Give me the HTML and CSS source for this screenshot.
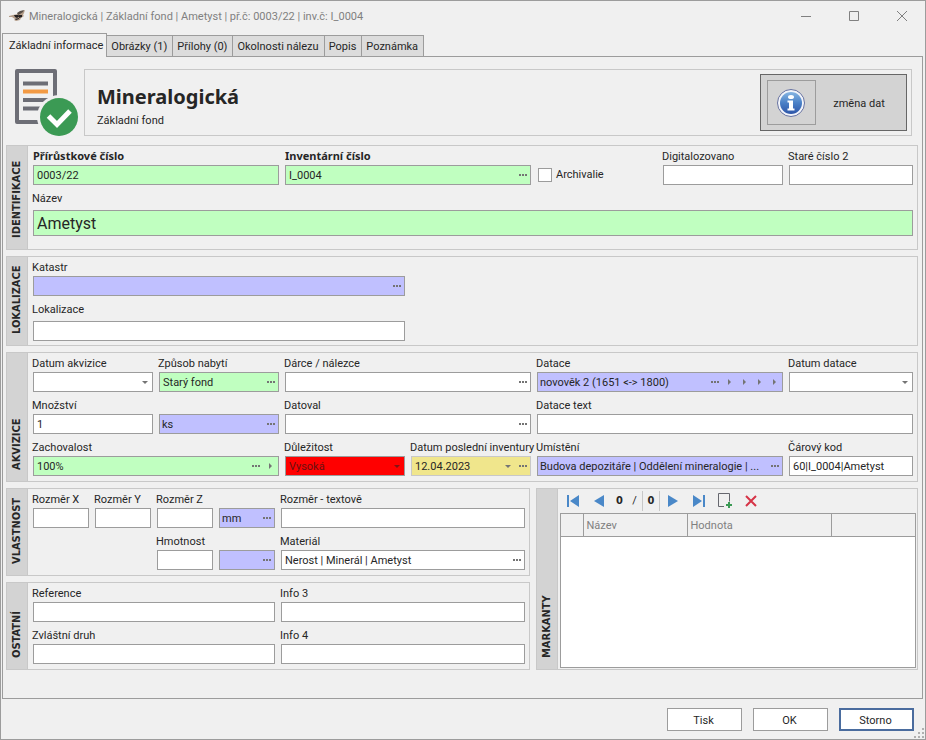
FILE: index.html
```html
<!DOCTYPE html>
<html lang="cs">
<head>
    <meta charset="utf-8">
    <title>Mineralogická | Základní fond | Ametyst</title>
    <link rel="stylesheet" href="styles.css">
</head>
<body>
    <!-- shared glyphs -->
    <svg class="defs" width="0" height="0">
        <symbol id="dots" viewBox="0 0 8 2"><path d="M0 0h2v2H0zM3 0h2v2H3zM6 0h2v2H6z"/></symbol>
        <symbol id="down" viewBox="0 0 6 3"><path d="M0 0h6L3 3z"/></symbol>
        <symbol id="right" viewBox="0 0 3 6"><path d="M0 0v6l3-3z"/></symbol>
    </svg>

    <div class="window">
        <header class="titlebar">
            <svg class="app-icon" width="16" height="12" viewBox="0 0 16 12">
                <path d="M0 6l4-1 5-1 2-2 5-2-1 3-1 2 1 1-3 2-1 2-4 1-2-1 1-1-3-2-3 0z" fill="#b39c88"/>
                <path d="M8 3l3-2 4-1-1 2-3 2-2 1z" fill="#5a5048"/>
                <path d="M5 5l4 0 2 1-3 2-2-1z" fill="#242021"/>
                <path d="M10 5l3 0 0 2-3 1z" fill="#242021"/>
                <path d="M6 9l4-1 0 1-3 1z" fill="#29272a"/>
            </svg>
            <h1 class="title">Mineralogická | Základní fond | Ametyst | př.č: 0003/22 | inv.č: I_0004</h1>
            <div class="controls">
                <button aria-label="Minimalizovat"><svg width="10" height="10"><path d="M0 5.5h10"/></svg></button>
                <button aria-label="Maximalizovat"><svg width="10" height="10"><path d="M.5 .5h9v9h-9z"/></svg></button>
                <button aria-label="Zavřít"><svg width="10" height="10"><path d="M0 0l10 10M10 0L0 10"/></svg></button>
            </div>
        </header>

        <nav class="tabs">
            <button class="tab active">Základní informace</button>
            <button class="tab">Obrázky (1)</button>
            <button class="tab">Přílohy (0)</button>
            <button class="tab">Okolnosti nálezu</button>
            <button class="tab">Popis</button>
            <button class="tab">Poznámka</button>
        </nav>

        <main class="page">
            <div class="head">
                <svg class="head-icon" width="64" height="67" viewBox="0 0 64 67">
                    <path d="M3 2h38v51H3z" fill="none" stroke="#6d6e76" stroke-width="4" stroke-linejoin="round"/>
                    <path d="M9 14.500h25M9 31h25M9 39.500h25" stroke="#6d6e76" stroke-width="4"/>
                    <path d="M9 22.500h25" stroke="#f29a44" stroke-width="4"/>
                    <circle cx="45" cy="48" r="22" fill="#f0f0f0"/>
                    <circle cx="45" cy="48" r="19" fill="#3b9a54"/>
                    <path d="M34.500 47l8.500 8.500L56 42" fill="none" stroke="#fff" stroke-width="5"/>
                </svg>
                <div class="head-box">
                    <div>
                        <h2>Mineralogická</h2>
                        <p>Základní fond</p>
                    </div>
                    <button class="change">
                        <span class="change-icon">
                            <svg width="28" height="28" viewBox="0 0 28 28">
                                <defs>
                                    <linearGradient id="blue" x1="0" y1="0" x2="0" y2="1">
                                        <stop offset="0" stop-color="#86b5e2"/>
                                        <stop offset=".5" stop-color="#4a80c6"/>
                                        <stop offset="1" stop-color="#2d55a8"/>
                                    </linearGradient>
                                </defs>
                                <circle cx="14" cy="14" r="13.500" fill="#f2f4fa" stroke="#66719f"/>
                                <circle cx="14" cy="14" r="11" fill="url(#blue)"/>
                                <ellipse cx="14" cy="8" rx="3" ry="2" fill="#fff"/>
                                <path d="M10.500 11.500h5.500v8h1.500v2h-7v-2h1.500v-6h-1.500z" fill="#fff"/>
                            </svg>
                        </span>
                        <span class="change-text">změna dat</span>
                    </button>
                </div>
            </div>

            <section class="group ident">
                <h3>IDENTIFIKACE</h3>
                <div class="fields wide">
                    <div class="field c2 strong">
                        <label for="prir">Přírůstkové číslo</label>
                        <div class="box green"><input id="prir" value="0003/22"></div>
                    </div>
                    <div class="field c2 strong">
                        <label for="inv">Inventární číslo</label>
                        <div class="box green"><input id="inv" value="I_0004"><button aria-label="Vybrat"><svg width="8" height="2"><use href="#dots"/></svg></button></div>
                    </div>
                    <label class="check"><input type="checkbox"> Archivalie</label>
                    <div class="field">
                        <label for="digi">Digitalozovano</label>
                        <div class="box"><input id="digi"></div>
                    </div>
                    <div class="field">
                        <label for="stare">Staré číslo 2</label>
                        <div class="box"><input id="stare"></div>
                    </div>
                    <div class="field c7 spaced big">
                        <label for="nazev">Název</label>
                        <div class="box green"><input id="nazev" value="Ametyst"></div>
                    </div>
                </div>
            </section>

            <section class="group lokal">
                <h3>LOKALIZACE</h3>
                <div class="fields wide">
                    <div class="field c3">
                        <label for="katastr">Katastr</label>
                        <div class="box blue"><input id="katastr"><button aria-label="Vybrat"><svg width="8" height="2"><use href="#dots"/></svg></button></div>
                    </div>
                    <div class="field c3 spaced row-start">
                        <label for="lokal">Lokalizace</label>
                        <div class="box"><input id="lokal"></div>
                    </div>
                </div>
            </section>

            <section class="group">
                <h3>AKVIZICE</h3>
                <div class="fields wide">
                    <div class="field">
                        <label for="datum">Datum akvizice</label>
                        <div class="box"><input id="datum"><button aria-label="Kalendář"><svg width="6" height="3"><use href="#down"/></svg></button></div>
                    </div>
                    <div class="field">
                        <label for="zpusob">Způsob nabytí</label>
                        <div class="box green"><input id="zpusob" value="Starý fond"><button aria-label="Vybrat"><svg width="8" height="2"><use href="#dots"/></svg></button></div>
                    </div>
                    <div class="field c2">
                        <label for="darce">Dárce / nálezce</label>
                        <div class="box"><input id="darce"><button aria-label="Vybrat"><svg width="8" height="2"><use href="#dots"/></svg></button></div>
                    </div>
                    <div class="field c2">
                        <label for="datace">Datace</label>
                        <div class="box blue">
                            <input id="datace" value="novověk 2 (1651 &lt;-&gt; 1800)">
                            <button aria-label="Vybrat"><svg width="8" height="2"><use href="#dots"/></svg></button>
                            <button aria-label="Úroveň 1"><svg width="3" height="6"><use href="#right"/></svg></button>
                            <button aria-label="Úroveň 2"><svg width="3" height="6"><use href="#right"/></svg></button>
                            <button aria-label="Úroveň 3"><svg width="3" height="6"><use href="#right"/></svg></button>
                            <button aria-label="Úroveň 4"><svg width="3" height="6"><use href="#right"/></svg></button>
                        </div>
                    </div>
                    <div class="field">
                        <label for="ddatace">Datum datace</label>
                        <div class="box"><input id="ddatace"><button aria-label="Kalendář"><svg width="6" height="3"><use href="#down"/></svg></button></div>
                    </div>

                    <div class="field">
                        <label for="mnoz">Množství</label>
                        <div class="box"><input id="mnoz" value="1"></div>
                    </div>
                    <div class="field">
                        <div class="box blue"><input aria-label="Jednotka množství" value="ks"><button aria-label="Vybrat"><svg width="8" height="2"><use href="#dots"/></svg></button></div>
                    </div>
                    <div class="field c2">
                        <label for="datoval">Datoval</label>
                        <div class="box"><input id="datoval"><button aria-label="Vybrat"><svg width="8" height="2"><use href="#dots"/></svg></button></div>
                    </div>
                    <div class="field c3">
                        <label for="dtext">Datace text</label>
                        <div class="box"><input id="dtext"></div>
                    </div>

                    <div class="field c2">
                        <label for="zach">Zachovalost</label>
                        <div class="box green">
                            <input id="zach" value="100%">
                            <button aria-label="Vybrat"><svg width="8" height="2"><use href="#dots"/></svg></button>
                            <button aria-label="Další"><svg width="3" height="6"><use href="#right"/></svg></button>
                        </div>
                    </div>
                    <div class="field">
                        <label for="dulez">Důležitost</label>
                        <div class="box red"><select id="dulez"><option>Vysoká</option></select><span class="arrow"><svg width="6" height="3"><use href="#down"/></svg></span></div>
                    </div>
                    <div class="field">
                        <label for="dinv">Datum poslední inventury</label>
                        <div class="box yellow">
                            <input id="dinv" value="12.04.2023">
                            <button aria-label="Kalendář"><svg width="6" height="3"><use href="#down"/></svg></button>
                            <button aria-label="Vybrat"><svg width="8" height="2"><use href="#dots"/></svg></button>
                        </div>
                    </div>
                    <div class="field c2">
                        <label for="umist">Umístění</label>
                        <div class="box blue"><input id="umist" value="Budova depozitáře | Oddělení mineralogie | ..."><button aria-label="Vybrat"><svg width="8" height="2"><use href="#dots"/></svg></button></div>
                    </div>
                    <div class="field">
                        <label for="kod">Čárový kod</label>
                        <div class="box"><input id="kod" value="60|I_0004|Ametyst"></div>
                    </div>
                </div>
            </section>

            <div class="bottom">
                <div class="stack">
                    <section class="group">
                        <h3>VLASTNOST</h3>
                        <div class="fields narrow">
                            <div class="field">
                                <label for="rx">Rozměr X</label>
                                <div class="box"><input id="rx"></div>
                            </div>
                            <div class="field">
                                <label for="ry">Rozměr Y</label>
                                <div class="box"><input id="ry"></div>
                            </div>
                            <div class="field">
                                <label for="rz">Rozměr Z</label>
                                <div class="box"><input id="rz"></div>
                            </div>
                            <div class="field">
                                <div class="box blue"><input aria-label="Jednotka rozměru" value="mm"><button aria-label="Vybrat"><svg width="8" height="2"><use href="#dots"/></svg></button></div>
                            </div>
                            <div class="field">
                                <label for="rt">Rozměr - textově</label>
                                <div class="box"><input id="rt"></div>
                            </div>
                            <div class="field third">
                                <label for="hmot">Hmotnost</label>
                                <div class="box"><input id="hmot"></div>
                            </div>
                            <div class="field">
                                <div class="box blue"><input aria-label="Jednotka hmotnosti"><button aria-label="Vybrat"><svg width="8" height="2"><use href="#dots"/></svg></button></div>
                            </div>
                            <div class="field">
                                <label for="mat">Materiál</label>
                                <div class="box"><input id="mat" value="Nerost | Minerál | Ametyst"><button aria-label="Vybrat"><svg width="8" height="2"><use href="#dots"/></svg></button></div>
                            </div>
                        </div>
                    </section>

                    <section class="group">
                        <h3>OSTATNÍ</h3>
                        <div class="fields narrow">
                            <div class="field c4">
                                <label for="ref">Reference</label>
                                <div class="box"><input id="ref"></div>
                            </div>
                            <div class="field">
                                <label for="info3">Info 3</label>
                                <div class="box"><input id="info3"></div>
                            </div>
                            <div class="field c4">
                                <label for="druh">Zvláštní druh</label>
                                <div class="box"><input id="druh"></div>
                            </div>
                            <div class="field">
                                <label for="info4">Info 4</label>
                                <div class="box"><input id="info4"></div>
                            </div>
                        </div>
                    </section>
                </div>

                <section class="group">
                    <h3>MARKANTY</h3>
                    <div class="marks">
                        <div class="toolbar">
                            <button aria-label="První"><svg width="12" height="12" fill="#4a88c8"><path d="M0 0h2v12H0zM12 0v12L3 6z"/></svg></button>
                            <button aria-label="Předchozí"><svg width="10" height="12" fill="#4a88c8"><path d="M10 0v12L0 6z"/></svg></button>
                            <b class="pos">0</b>
                            <span class="slash">/</span>
                            <b class="count">0</b>
                            <button aria-label="Další"><svg width="10" height="12" fill="#4a88c8"><path d="M0 0v12l10-6z"/></svg></button>
                            <button aria-label="Poslední"><svg width="12" height="12" fill="#4a88c8"><path d="M10 0h2v12h-2zM0 0v12l9-6z"/></svg></button>
                            <button aria-label="Přidat"><svg width="14" height="16"><path d="M6 13.500H.5V.5h11v8" fill="none" stroke="#66676e"/><path d="M8 11h2V9h2v2h2v2h-2v2h-2v-2H8z" fill="#3b9a54"/></svg></button>
                            <button aria-label="Smazat"><svg width="12" height="12"><path d="M1 1l10 10M11 1L1 11" stroke="#d63447" stroke-width="2"/></svg></button>
                        </div>
                        <div class="grid">
                            <table>
                                <colgroup><col class="col-mark"><col class="col-name"><col class="col-value"><col></colgroup>
                                <thead>
                                    <tr><th></th><th>Název</th><th>Hodnota</th><th></th></tr>
                                </thead>
                            </table>
                        </div>
                    </div>
                </section>
            </div>
        </main>

        <footer class="footer">
            <button>Tisk</button>
            <button>OK</button>
            <button class="default">Storno</button>
            <svg class="grip" width="12" height="12" fill="#b0b0b0"><path d="M8 0h2v2H8zM4 4h2v2H4zM8 4h2v2H8zM0 8h2v2H0zM4 8h2v2H4zM8 8h2v2H8z"/></svg>
        </footer>
    </div>
</body>
</html>
```
FILE: styles.css
```css
* {
    box-sizing: border-box;
}

body {
    margin: 0;
    background-color: #f0f0f0;
    color: #262626;
    font: 11px/20px Roboto, Tahoma, sans-serif;
}

h1, h2, h3, p {
    margin: 0;
    font-size: inherit;
}

button, input, select {
    font: inherit;
    color: inherit;
    margin: 0;
    padding: 0;
    border: none;
    border-radius: 0;
    background: none;
}

svg {
    display: block;
}

.defs {
    position: absolute;
}

.window {
    display: flex;
    flex-direction: column;
    min-height: 100vh;
    border: 1px solid #9c9c9c;
}

/* title bar */

.titlebar {
    display: flex;
    align-items: center;
    height: 30px;
    margin-bottom: 2px;
    padding-left: 8px;
}

.title {
    flex: 1;
    margin-left: 4px;
    padding-top: 2px;
    font-weight: normal;
    color: #808080;
}

.controls {
    display: flex;
}

.controls button {
    display: flex;
    justify-content: center;
    align-items: center;
    width: 48px;
    height: 30px;
    padding-left: 2px;
}

.controls svg {
    fill: none;
    stroke: #808080;
}

/* tabs */

.tabs {
    display: flex;
    align-items: flex-end;
    margin-left: 1px;
}

.tab {
    height: 21px;
    padding: 2px 5px 0 4px;
    border: 1px solid #9c9c9c;
    border-bottom: none;
    border-left: none;
    background-color: #dcdcdc;
    line-height: 18px;
    white-space: nowrap;
}

.tab.active {
    position: relative;
    height: 24px;
    margin-bottom: -1px;
    padding: 0 3px 0 6px;
    border-left: 1px solid #9c9c9c;
    background-color: #f0f0f0;
}

.page {
    flex: 1;
    display: flex;
    flex-direction: column;
    gap: 6px;
    margin: 0 2px 0 1px;
    padding: 12px 4px 28px 3px;
    border: 1px solid #9c9c9c;
}

/* header */

.head {
    display: flex;
    gap: 6px;
    margin: 0 6px 3px 8px;
}

.head-box {
    flex: 1;
    display: flex;
    justify-content: space-between;
    align-items: center;
    padding: 4px 4px 4px 12px;
    border: 1px solid #c8c8c8;
}

.head h2 {
    margin-top: 8px;
    font: bold 20px/28px "Noto Sans", Tahoma, sans-serif;
}

.change {
    display: flex;
    align-items: center;
    width: 147px;
    height: 57px;
    padding-left: 6px;
    border: 1px solid #666;
    background-color: #d3d3d3;
}

.change-icon {
    display: flex;
    justify-content: center;
    align-items: center;
    width: 49px;
    height: 45px;
    padding-right: 2px;
    border: 1px solid #9c9c9c;
}

.change-text {
    flex: 1;
    padding: 2px 4px 0 0;
}

/* groups */

.group {
    display: flex;
    border: 1px solid #c8c8c8;
}

.group h3 {
    width: 21px;
    padding-top: 11px;
    border-left: 1px solid #c8c8c8;
    background-color: #d3d3d3;
    font: bold 11px/20px "DejaVu Sans Condensed", Tahoma, sans-serif;
    writing-mode: vertical-rl;
    transform: rotate(180deg);
}

.fields {
    flex: 1;
    display: grid;
    align-items: end;
    gap: 4px 6px;
    padding: 1px 4px 5px 5px;
}

.wide {
    grid-template-columns: repeat(6, minmax(0, 30fr)) minmax(0, 31fr);
}

.narrow {
    grid-template-columns: repeat(4, minmax(0, 14fr)) minmax(0, 61fr);
}

.ident .fields {
    padding-bottom: 13px;
}

.lokal .fields {
    padding-bottom: 4px;
}

.c2 { grid-column: span 2; }
.c3 { grid-column: span 3; }
.c4 { grid-column: span 4; }
.c7 { grid-column: span 7; }
.row-start { grid-column: 1 / span 3; }
.third { grid-column: 3; }

.field label {
    display: block;
    height: 18px;
    margin-left: -1px;
    white-space: nowrap;
}

.strong label {
    margin-left: 0;
    font: bold 11px/18px "Noto Sans", Tahoma, sans-serif;
}

.spaced label {
    margin-bottom: 3px;
}

.box {
    display: flex;
    height: 20px;
    border: 1px solid #9c9c9c;
    background-color: #fff;
}

.box input, .box select {
    flex: 1;
    min-width: 0;
    padding: 2px 2px 0 3px;
    line-height: 16px;
    outline: none;
    appearance: none;
}

.box button, .arrow {
    display: flex;
    justify-content: center;
    align-items: center;
    width: 15px;
    fill: #747474;
}

.box.green { background-color: #c0ffc0; }
.box.blue { background-color: #c0c0ff; }
.box.yellow { background-color: #f0e68c; border-color: #c8c8c8; }
.box.red { background-color: #f00; color: #6b1010; }
.box.red .arrow { fill: #801414; }

.box.blue input {
    padding-left: 2px;
}

.big .box {
    height: 26px;
    font-size: 16px;
}

.big .box input {
    padding-top: 0;
}

.check {
    display: flex;
    align-items: center;
    gap: 4px;
    height: 20px;
    padding-left: 1px;
}

.check input {
    appearance: none;
    width: 14px;
    height: 14px;
    border: 1px solid #9c9c9c;
    background-color: #fff;
}

/* bottom row */

.bottom {
    display: grid;
    grid-template-columns: minmax(0, 262fr) minmax(0, 191fr);
    gap: 6px;
}

.stack {
    display: flex;
    flex-direction: column;
    gap: 6px;
}

.marks {
    flex: 1;
    display: flex;
    flex-direction: column;
    padding: 0 1px 1px 2px;
}

.toolbar {
    display: flex;
    align-items: center;
    height: 24px;
}

.toolbar b {
    font-family: "DejaVu Sans Condensed", Tahoma, sans-serif;
}

.toolbar button {
    display: flex;
    justify-content: center;
    width: 26px;
}

.pos, .slash, .count {
    width: 15px;
    text-align: center;
}

.count {
    width: 18px;
    border: solid #c8c8c8;
    border-width: 0 1px;
}

.grid {
    flex: 1;
    border: 1px solid #9c9c9c;
    background-color: #fff;
}

table {
    width: 100%;
    table-layout: fixed;
    border-collapse: collapse;
}

.col-mark { width: 22px; }
.col-name { width: 104px; }
.col-value { width: 144px; }

th {
    height: 22px;
    padding: 2px 3px 0;
    border-right: 1px solid #9c9c9c;
    border-bottom: 1px solid #9c9c9c;
    background-color: #f0f0f0;
    color: #808080;
    font-weight: normal;
    line-height: 18px;
    text-align: left;
}

th:last-child {
    border-right: none;
}

/* footer */

.footer {
    position: relative;
    display: flex;
    justify-content: flex-end;
    gap: 11px;
    padding: 9px 11px 8px;
}

.footer button {
    width: 75px;
    height: 23px;
    padding: 2px 2px 0 0;
    border: 1px solid #9c9c9c;
    background-color: #fff;
    line-height: 16px;
}

.footer .default {
    border: 2px solid #4a6c9e;
}

.grip {
    position: absolute;
    right: -1px;
    bottom: -1px;
}
```
